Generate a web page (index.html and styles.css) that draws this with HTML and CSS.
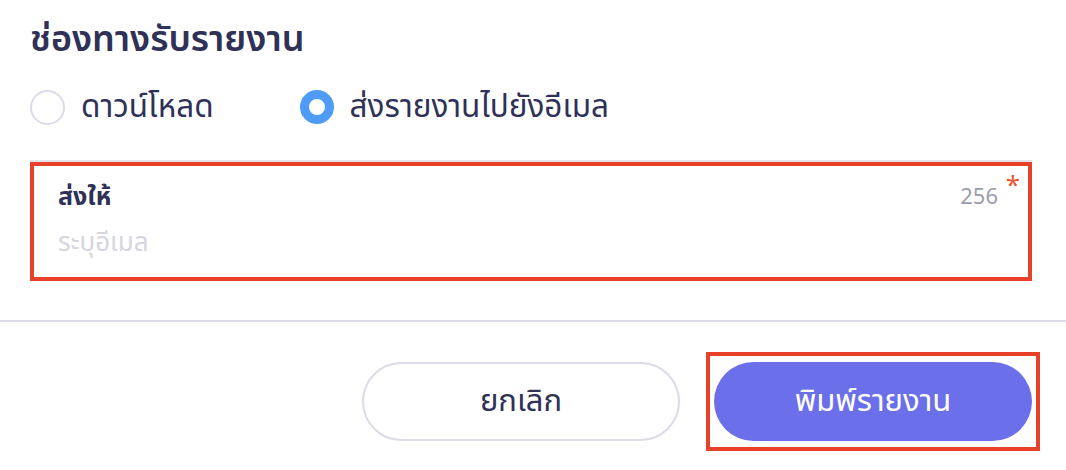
FILE: index.html
```html
<!DOCTYPE html>
<html lang="th">
<head>
  <meta charset="UTF-8">
  <meta name="viewport" content="width=device-width, initial-scale=1.0">
  <title>ช่องทางรับรายงาน</title>
  <link rel="stylesheet" href="styles.css">
</head>
<body>
  <section class="channel">
    <h2 class="channel-title">ช่องทางรับรายงาน</h2>

    <div class="radio-row">
      <label class="radio-option">
        <span class="radio"></span>
        <span>ดาวน์โหลด</span>
      </label>
      <label class="radio-option">
        <span class="radio checked"></span>
        <span>ส่งรายงานไปยังอีเมล</span>
      </label>
    </div>

    <!-- Email field (highlighted) -->
    <div class="field-mark">
      <div class="field">
        <div class="field-head">
          <span class="field-label">ส่งให้</span>
          <span class="field-count">256</span>
        </div>
        <div class="field-input">ระบุอีเมล</div>
        <span class="required">*</span>
      </div>
    </div>
  </section>

  <footer class="actions">
    <button class="btn btn-cancel">ยกเลิก</button>
    <div class="btn-mark">
      <button class="btn btn-primary">พิมพ์รายงาน</button>
    </div>
  </footer>
</body>
</html>
```

FILE: styles.css
```css
body {
  margin: 0;
  background: #ffffff;
  font-family: "Noto Sans Thai", "Noto Sans", "Open Sans", sans-serif;
  color: #2f3157;
}

/* Top section */
.channel {
  padding: 14px 34px 0 30px;
}

.channel-title {
  font-size: 36px;
  font-weight: 600;
  margin: 0;
  line-height: 52px;
}

.radio-row {
  display: flex;
  gap: 86px;
  margin-top: 24px;
  height: 34px;
  align-items: center;
}

.radio-option {
  display: flex;
  align-items: center;
  gap: 16px;
  font-size: 31.5px;
}

.radio {
  width: 31px;
  height: 31px;
  border: 2px solid #dcdbe7;
  border-radius: 50%;
}

.radio.checked {
  width: 16px;
  height: 16px;
  border: 9px solid #4f9bf8;
}

/* Email field with red highlight */
.field-mark {
  margin-top: 38px;
  border: 4px solid #e8412a;
  height: 119px;
  box-sizing: border-box;
  position: relative;
}

.field-mark::before {
  content: "";
  position: absolute;
  top: -6px;
  left: -4px;
  right: -4px;
  height: 2px;
  background: #e3e3ea;
}

.field {
  position: relative;
  padding: 14px 30px 0 24px;
}

.field-head {
  display: flex;
  justify-content: space-between;
  align-items: center;
  height: 34px;
}

.field-label {
  font-size: 25px;
  font-weight: bold;
}

.field-count {
  font-size: 22px;
  color: #9c9cb0;
}

.field-input {
  margin-top: 12px;
  font-size: 26px;
  line-height: 34px;
  color: #d6d5e0;
}

.required {
  position: absolute;
  top: 0;
  right: 8px;
  color: #e8552f;
  font-size: 26px;
}

/* Bottom buttons */
.actions {
  margin-top: 39px;
  border-top: 2px solid #dddbe8;
  display: flex;
  justify-content: flex-end;
  align-items: center;
  gap: 26px;
  padding: 30px 26px 0 0;
}

.btn {
  width: 318px;
  height: 79px;
  border-radius: 40px;
  font-family: inherit;
  font-size: 31px;
  cursor: pointer;
}

.btn-cancel {
  background: #ffffff;
  border: 2px solid #dcdbe7;
  color: #2f3157;
}

.btn-mark {
  border: 4px solid #e8412a;
  padding: 6px 4px;
}

.btn-primary {
  display: block;
  background: #6b70ea;
  border: none;
  color: #ffffff;
}
```
